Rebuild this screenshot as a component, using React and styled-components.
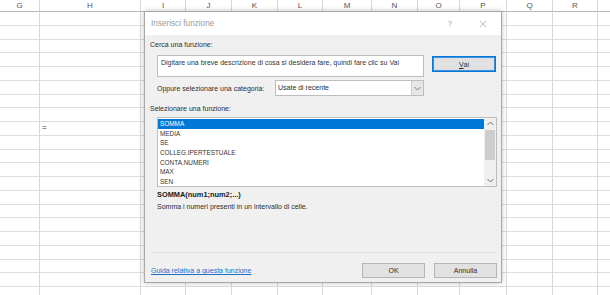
import styled, { createGlobalStyle } from "styled-components";

const GlobalStyle = createGlobalStyle`
  html, body {
    margin: 0;
    padding: 0;
    width: 610px;
    height: 295px;
    overflow: hidden;
    background: #ffffff;
    font-family: "Liberation Sans", Arial, sans-serif;
  }
`;

const COLUMNS = [
  { name: "G", width: 40 },
  { name: "H", width: 101 },
  { name: "I", width: 45 },
  { name: "J", width: 46 },
  { name: "K", width: 46 },
  { name: "L", width: 45 },
  { name: "M", width: 49 },
  { name: "N", width: 46 },
  { name: "O", width: 42 },
  { name: "P", width: 47 },
  { name: "Q", width: 46 },
  { name: "R", width: 45 },
  { name: "", width: 40 },
];

const ROW_COUNT = 21;

const FUNCTIONS = ["SOMMA", "MEDIA", "SE", "COLLEG.IPERTESTUALE", "CONTA.NUMERI", "MAX", "SEN"];

const App = () => {
  return (
    <>
      <GlobalStyle />
      <Screen>
        <Sheet>
          {COLUMNS.map((col, i) => (
            <HeaderCell key={"h" + i}>{col.name}</HeaderCell>
          ))}
          {Array.from({ length: ROW_COUNT }).map((_, r) =>
            COLUMNS.map((col, c) => (
              <Cell key={r + "-" + c}>{r === 8 && col.name === "H" ? "=" : ""}</Cell>
            ))
          )}
        </Sheet>

        <Dialog>
          <TitleBar>
            <Title>Inserisci funzione</Title>
            <TitleControls>
              <HelpMark>?</HelpMark>
              <CloseIcon viewBox="0 0 10 10">
                <path d="M1 1 L9 9 M9 1 L1 9" stroke="#a0a0a0" strokeWidth="0.9" fill="none" />
              </CloseIcon>
            </TitleControls>
          </TitleBar>

          <Body>
            <Label>Cerca una funzione:</Label>
            <SearchRow>
              <SearchBox>Digitare una breve descrizione di cosa si desidera fare, quindi fare clic su Vai</SearchBox>
              <Button $primary>
                <u>V</u>ai
              </Button>
            </SearchRow>

            <CategoryRow>
              <CategoryLabel>Oppure selezionare una categoria:</CategoryLabel>
              <Select>
                <SelectValue>Usate di recente</SelectValue>
                <SelectArrow>
                  <svg width="7" height="5" viewBox="0 0 7 5">
                    <path d="M0.5 1 L3.5 4 L6.5 1" stroke="#707070" strokeWidth="0.9" fill="none" />
                  </svg>
                </SelectArrow>
              </Select>
            </CategoryRow>

            <Label $top={8}>Selezionare una funzione:</Label>
            <ListBox>
              <ListItems>
                {FUNCTIONS.map((fn, i) => (
                  <ListItem key={fn} $selected={i === 0}>
                    {fn}
                  </ListItem>
                ))}
              </ListItems>
              <ScrollBar>
                <ScrollArrow>
                  <svg width="7" height="5" viewBox="0 0 7 5">
                    <path d="M0.5 4 L3.5 1 L6.5 4" stroke="#606060" strokeWidth="0.9" fill="none" />
                  </svg>
                </ScrollArrow>
                <ScrollTrack>
                  <ScrollThumb />
                </ScrollTrack>
                <ScrollArrow>
                  <svg width="7" height="5" viewBox="0 0 7 5">
                    <path d="M0.5 1 L3.5 4 L6.5 1" stroke="#606060" strokeWidth="0.9" fill="none" />
                  </svg>
                </ScrollArrow>
              </ScrollBar>
            </ListBox>

            <Signature>SOMMA(num1;num2;...)</Signature>
            <Description>Somma i numeri presenti in un intervallo di celle.</Description>

            <Spacer />
            <Separator />

            <Footer>
              <HelpLink>Guida relativa a questa funzione</HelpLink>
              <FooterButtons>
                <Button $wide>OK</Button>
                <Button $wide>Annulla</Button>
              </FooterButtons>
            </Footer>
          </Body>
        </Dialog>
      </Screen>
    </>
  );
};

export default App;

const Screen = styled.div`
  position: relative;
  width: 610px;
  height: 295px;
  overflow: hidden;
`;

const Sheet = styled.div`
  display: grid;
  grid-template-columns: ${COLUMNS.map((c) => c.width + "px").join(" ")};
  grid-template-rows: 12px repeat(${ROW_COUNT}, 13.75px);
`;

const HeaderCell = styled.div`
  box-sizing: border-box;
  border-right: 1px solid #d8d8d8;
  border-bottom: 1px solid #b8b8b8;
  background: #ffffff;
  color: #555555;
  font-size: 8px;
  line-height: 11px;
  text-align: center;
`;

const Cell = styled.div`
  box-sizing: border-box;
  border-right: 1px solid #d9d9d9;
  border-bottom: 1px solid #dedede;
  font-size: 8px;
  line-height: 12px;
  padding-left: 2px;
  color: #333333;
`;

const Dialog = styled.div`
  position: absolute;
  left: 144px;
  top: 11px;
  width: 358px;
  height: 272px;
  box-sizing: border-box;
  border: 1px solid #a8a8a8;
  box-shadow: 0 0 5px rgba(0, 0, 0, 0.25);
  display: flex;
  flex-direction: column;
  background: #f0f0f0;
  color: #2e2e2e;
`;

const TitleBar = styled.div`
  height: 23px;
  background: #ffffff;
  display: flex;
  align-items: center;
  justify-content: space-between;
  padding: 0 14px 0 6px;
`;

const Title = styled.span`
  font-size: 8.2px;
  color: #9a9a9a;
`;

const TitleControls = styled.div`
  display: flex;
  align-items: center;
  gap: 27px;
`;

const HelpMark = styled.span`
  font-size: 8px;
  color: #a0a0a0;
`;

const CloseIcon = styled.svg`
  width: 8px;
  height: 8px;
`;

const Body = styled.div`
  flex: 1;
  display: flex;
  flex-direction: column;
  padding: 0 4px 4px 5px;
`;

const Label = styled.div`
  margin-top: ${(p) => p.$top || 5}px;
  font-size: 7px;
  line-height: 10px;
`;

const SearchRow = styled.div`
  display: flex;
  align-items: flex-start;
  gap: 8px;
  margin-top: 5px;
  padding-left: 7px;
`;

const SearchBox = styled.div`
  box-sizing: border-box;
  width: 267px;
  height: 22px;
  background: #ffffff;
  border: 1px solid #bdbdbd;
  font-size: 7px;
  line-height: 10px;
  padding: 2px 3px;
  color: #333333;
  white-space: nowrap;
  overflow: hidden;
`;

const Button = styled.div`
  box-sizing: border-box;
  width: ${(p) => (p.$wide ? 63 : 64)}px;
  height: ${(p) => (p.$wide ? 15 : 16)}px;
  margin-top: ${(p) => (p.$primary ? 1 : 0)}px;
  background: #e1e1e1;
  border: 1px solid ${(p) => (p.$primary ? "#0078d7" : "#b5b5b5")};
  box-shadow: ${(p) => (p.$primary ? "inset 0 0 0 1px #3c92de" : "none")};
  font-size: 7px;
  display: flex;
  align-items: center;
  justify-content: center;
  color: #2e2e2e;
`;

const CategoryRow = styled.div`
  display: flex;
  align-items: center;
  margin-top: 3px;
  padding-left: 7px;
`;

const CategoryLabel = styled.span`
  width: 118px;
  font-size: 7px;
`;

const Select = styled.div`
  box-sizing: border-box;
  width: 149px;
  height: 16px;
  background: #ffffff;
  border: 1px solid #bdbdbd;
  display: flex;
  align-items: stretch;
`;

const SelectValue = styled.span`
  flex: 1;
  font-size: 7px;
  line-height: 14px;
  padding-left: 2px;
`;

const SelectArrow = styled.span`
  width: 11px;
  background: #e6e6e6;
  border-left: 1px solid #cfcfcf;
  display: flex;
  align-items: center;
  justify-content: center;
`;

const ListBox = styled.div`
  box-sizing: border-box;
  margin: 3px 0 0 7px;
  width: 340px;
  height: 70px;
  background: #ffffff;
  border: 1px solid #bdbdbd;
  display: flex;
`;

const ListItems = styled.div`
  flex: 1;
  padding-top: 1px;
`;

const ListItem = styled.div`
  height: 9.67px;
  line-height: 9.67px;
  font-size: 6.4px;
  padding-left: 2px;
  background: ${(p) => (p.$selected ? "#0078d7" : "transparent")};
  color: ${(p) => (p.$selected ? "#ffffff" : "#333333")};
`;

const ScrollBar = styled.div`
  width: 12px;
  background: #f0f0f0;
  display: flex;
  flex-direction: column;
`;

const ScrollArrow = styled.div`
  height: 11px;
  display: flex;
  align-items: center;
  justify-content: center;
`;

const ScrollTrack = styled.div`
  flex: 1;
  padding: 1px 1px;
`;

const ScrollThumb = styled.div`
  height: 30px;
  background: #cdcdcd;
`;

const Signature = styled.div`
  margin: 3px 0 0 7px;
  font-size: 7.4px;
  font-weight: bold;
  line-height: 10px;
  color: #1a1a1a;
`;

const Description = styled.div`
  margin: 2px 0 0 7px;
  font-size: 7px;
  line-height: 10px;
`;

const Spacer = styled.div`
  flex: 1;
`;

const Separator = styled.div`
  height: 1px;
  background: #dadada;
  margin-left: 1px;
`;

const Footer = styled.div`
  display: flex;
  align-items: center;
  justify-content: space-between;
  margin-top: 10px;
`;

const HelpLink = styled.span`
  font-size: 7px;
  color: #1a6fc9;
  text-decoration: underline;
  margin-left: 1px;
`;

const FooterButtons = styled.div`
  display: flex;
  gap: 9px;
`;
